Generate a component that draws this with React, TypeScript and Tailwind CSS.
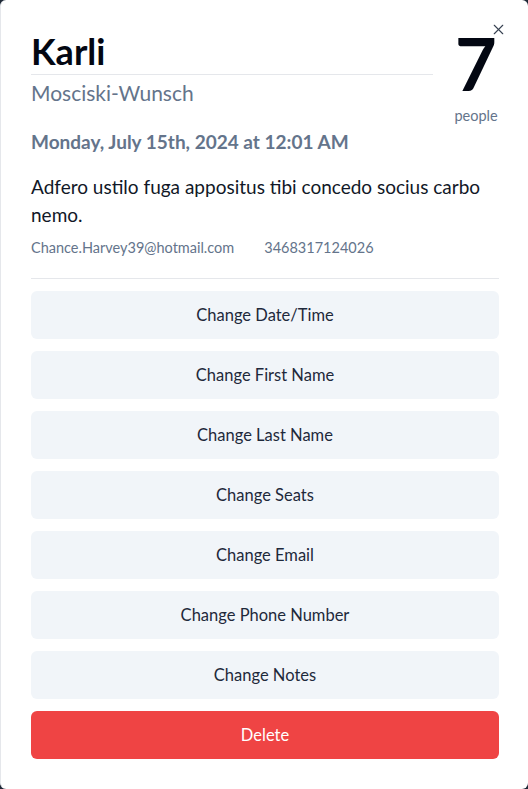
import { X } from 'lucide-react';

const actions = [
  'Change Date/Time',
  'Change First Name',
  'Change Last Name',
  'Change Seats',
  'Change Email',
  'Change Phone Number',
  'Change Notes',
];

export default function App() {
  return (
    <div className="min-h-screen bg-[#1f2937]" style={{ fontFamily: 'Lato, "Noto Sans", sans-serif' }}>
      <div className="relative h-[789px] w-[528px] rounded-md border-l border-[#e5e7eb] bg-white pl-[30px] pr-[29px] pt-[31px]">
        <button className="absolute right-[21px] top-[21px] text-[#374151]">
          <X size={17} strokeWidth={1.6} />
        </button>

        <div className="flex items-start gap-5">
          <div className="flex-1">
            <h1 className="border-b border-[#e5e7eb] pb-[3px] text-4xl font-bold text-[#030712]">Karli</h1>
            <h2 className="pt-[4px] text-[21px] leading-7 text-[#64748b]">Mosciski-Wunsch</h2>
          </div>
          <div className="flex h-[80px] w-[46px] flex-col items-center pt-[2px]">
            <span className="text-7xl leading-[60px] font-bold text-[#030712]">7</span>
            <span className="mt-[13px] text-[14.5px] leading-5 text-[#64748b]">people</span>
          </div>
        </div>

        <p className="mt-[17px] text-[19px] leading-7 font-bold text-[#64748b]">Monday, July 15th, 2024 at 12:01 AM</p>
        <p className="mt-[17px] text-[19px] leading-7 text-[#111827]">
          Adfero ustilo fuga appositus tibi concedo socius carbo nemo.
        </p>
        <div className="mt-[9px] flex gap-[30px] text-[14.5px] leading-5 text-[#64748b]">
          <span>Chance.Harvey39@hotmail.com</span>
          <span>3468317124026</span>
        </div>

        <div className="mt-[20px] border-t border-[#e5e7eb] pt-[12px]">
          <div className="flex flex-col gap-3">
            {actions.map((a) => (
              <button key={a} className="h-12 rounded-md bg-[#f1f5f9] text-[16.5px] text-[#1e293b]">
                {a}
              </button>
            ))}
            <button className="h-12 rounded-md bg-[#ef4444] text-[16.5px] text-white">Delete</button>
          </div>
        </div>
      </div>
    </div>
  );
}
